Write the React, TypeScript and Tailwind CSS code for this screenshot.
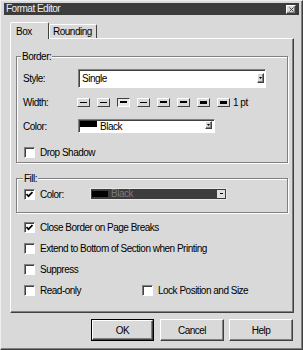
import React from "react";

const raised =
  "border border-t-white border-l-white border-r-[#404040] border-b-[#404040] shadow-[inset_-1px_-1px_0_#808080]";
const sunken =
  "border border-t-[#808080] border-l-[#808080] border-r-white border-b-white shadow-[inset_1px_1px_0_#404040]";
const etched =
  "border border-[#808080] shadow-[inset_1px_1px_0_#ffffff,1px_1px_0_#ffffff]";

function Check({ checked }: { checked?: boolean }) {
  return (
    <div
      className={
        "w-[11px] h-[11px] bg-white flex items-center justify-center shrink-0 " +
        sunken
      }
    >
      {checked && (
        <svg width="7" height="7" viewBox="0 0 7 7">
          <path d="M0.5 3 L2.5 5.2 L6.5 1" stroke="black" strokeWidth="1.7" fill="none" />
        </svg>
      )}
    </div>
  );
}

function CheckRow({ label, checked }: { label: string; checked?: boolean }) {
  return (
    <div className="flex items-center h-[13px]">
      <Check checked={checked} />
      <span className="ml-[5px] leading-[13px]">{label}</span>
    </div>
  );
}

function Arrow() {
  return (
    <svg width="3" height="2" viewBox="0 0 3 2">
      <path d="M0 0 H3 L1.5 2 Z" fill="black" />
    </svg>
  );
}

const widths = [1, 1, 2, 1, 2, 2, 3, 3];

export default function App() {
  return (
    <div className="w-[303px] h-[350px] bg-[#d9d9d9] border border-t-[#eeeeee] border-l-[#eeeeee] border-r-[#404040] border-b-[#404040] shadow-[inset_-1px_-1px_0_#808080] pt-[2px] px-[3px] font-['Liberation_Sans',Arial,sans-serif] text-[10px] tracking-[-0.5px] text-black flex flex-col">
      {/* Title bar */}
      <div className="h-[12px] bg-[#3c3c3c] flex items-center justify-between pl-[2px] pr-[3px]">
        <span className="text-[#eeeeee] leading-[12px]">Format Editor</span>
        <div className={"w-[10px] h-[9px] bg-[#d9d9d9] flex items-center justify-center " + raised}>
          <svg width="5" height="5" viewBox="0 0 5 5">
            <path d="M0.5 0.5 L4.5 4.5 M4.5 0.5 L0.5 4.5" stroke="#404040" strokeWidth="1" />
          </svg>
        </div>
      </div>

      {/* Tabs */}
      <div className="mt-[7px] ml-[6px] flex items-end h-[16px]">
        <div className="relative z-10 w-[39px] h-[17px] -mb-[1px] bg-[#d9d9d9] border-t border-l border-r border-t-white border-l-white border-r-[#404040] rounded-t-[2px] pl-[5px] pt-[2px] leading-[13px]">
          Box
        </div>
        <div className="w-[48px] h-[14px] bg-[#d9d9d9] border-t border-l border-r border-t-white border-l-white border-r-[#404040] rounded-t-[2px] pl-[3px] leading-[13px]">
          Rounding
        </div>
      </div>

      {/* Panel */}
      <div className={"ml-[6px] w-[284px] h-[275px] flex flex-col " + raised}>
        {/* Border group */}
        <div className={"relative ml-[5px] mt-[17px] w-[272px] pt-[11px] pl-[6px] pb-[3px] " + etched}>
          <span className="absolute left-[4px] -top-[7px] px-[1px] bg-[#d9d9d9] leading-[13px]">Border:</span>
          <div className="flex flex-col gap-[4px]">
            <div className="flex items-center h-[20px]">
              <span className="w-[55px]">Style:</span>
              <div className={"w-[188px] h-[19px] bg-white flex items-center justify-between pl-[3px] pr-[1px] " + sunken}>
                <span className="leading-[13px]">Single</span>
                <div className={"w-[7px] h-[10px] bg-[#d9d9d9] flex items-center justify-center " + raised}>
                  <Arrow />
                </div>
              </div>
            </div>
            <div className="flex items-center h-[20px]">
              <span className="w-[54px]">Width:</span>
              <div className="flex gap-[7px]">
                {widths.map((t, i) => (
                  <div
                    key={i}
                    className={
                      i === 2
                        ? "w-[13px] h-[9px] bg-[#e8e8e8] border border-t-[#404040] border-l-[#404040] border-r-white border-b-white flex items-center justify-center"
                        : "w-[13px] h-[9px] bg-[#d9d9d9] border border-t-white border-l-white border-r-[#404040] border-b-[#404040] flex items-center justify-center"
                    }
                  >
                    <div className="w-[7px] bg-black" style={{ height: t }} />
                  </div>
                ))}
              </div>
              <span className="ml-[3px]">1 pt</span>
            </div>
            <div className="flex items-center h-[20px]">
              <span className="w-[55px]">Color:</span>
              <div className={"w-[137px] h-[14px] bg-white flex items-start overflow-hidden pl-[1px] pt-[1px] " + sunken}>
                <div className="w-[17px] h-[6px] bg-black shrink-0" />
                <span className="ml-[3px] mt-[1px] leading-[10px]">Black</span>
                <div className="flex-1" />
                <div className={"w-[7px] h-[8px] mr-[2px] bg-[#d9d9d9] flex items-center justify-center shrink-0 " + raised}>
                  <Arrow />
                </div>
              </div>
            </div>
          </div>
          <div className="mt-[10px] ml-[1px]">
            <CheckRow label="Drop Shadow" />
          </div>
        </div>

        {/* Fill group */}
        <div className={"relative ml-[5px] mt-[15px] w-[272px] pt-[9px] pl-[7px] pb-[11px] " + etched}>
          <span className="absolute left-[6px] -top-[7px] px-[1px] bg-[#d9d9d9] leading-[13px]">Fill:</span>
          <div className="flex items-center h-[13px]">
            <Check checked />
            <span className="ml-[5px] w-[50px] leading-[13px]">Color:</span>
            <div className="w-[137px] h-[12px] -mt-[2px] bg-[#3c3c3c] border border-[#e8e8e8] flex items-center pl-[1px] pr-[1px]">
              <div className="w-[16px] h-[6px] bg-black shrink-0" />
              <span className="ml-[3px] text-[#7a7a7a] leading-[10px]">Black</span>
              <div className="flex-1" />
              <div className="w-[8px] h-[8px] bg-[#e0e0e0] flex items-center justify-center shrink-0">
                <div className="w-[3px] h-[1px] bg-black" />
              </div>
            </div>
          </div>
        </div>

        {/* Checkboxes */}
        <div className="mt-[8px] ml-[13px] flex flex-col gap-[8px]">
          <CheckRow label="Close Border on Page Breaks" checked />
          <CheckRow label="Extend to Bottom of Section when Printing" />
          <CheckRow label="Suppress" />
          <div className="flex items-center">
            <div className="w-[118px]">
              <CheckRow label="Read-only" />
            </div>
            <CheckRow label="Lock Position and Size" />
          </div>
        </div>
      </div>

      {/* Buttons */}
      <div className="mt-[6px] flex ml-[87px]">
        <div className="w-[63px] h-[22px] border border-black">
          <div className={"w-full h-full flex items-center justify-center " + raised}>OK</div>
        </div>
        <div className={"ml-[6px] w-[64px] h-[22px] flex items-center justify-center " + raised}>Cancel</div>
        <div className={"ml-[5px] w-[64px] h-[22px] flex items-center justify-center " + raised}>Help</div>
      </div>
    </div>
  );
}
